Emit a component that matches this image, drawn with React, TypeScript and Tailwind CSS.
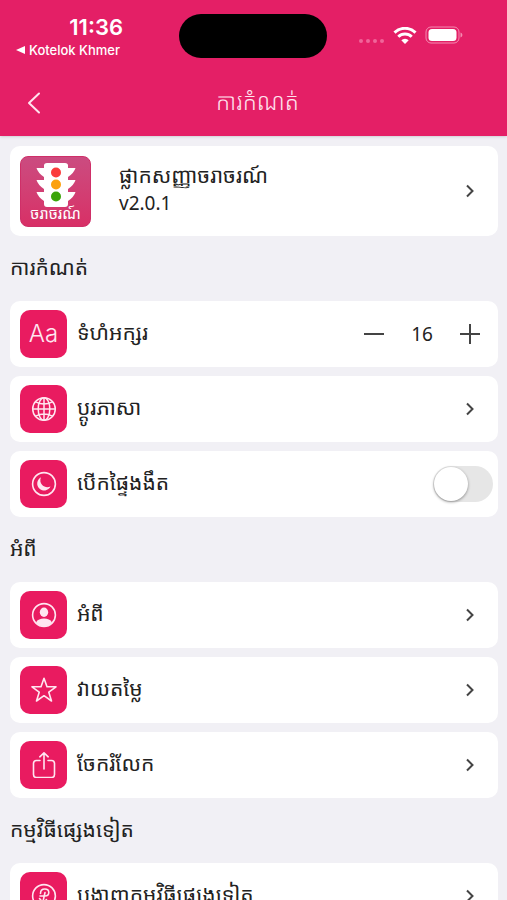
import { useState } from "react";
import type { ReactNode } from "react";

const svgProps = {
    viewBox: "0 0 26 26",
    fill: "none",
    stroke: "currentColor",
    strokeWidth: 1.6,
    strokeLinecap: "round" as const,
    strokeLinejoin: "round" as const,
    className: "h-[26px] w-[26px]",
    "aria-hidden": true,
};

const GlobeIcon = () => <svg {...svgProps} strokeWidth={1.5}>
    <circle cx="13" cy="13" r="11.3" />
    <ellipse cx="13" cy="13" rx="5.8" ry="11.3" />
    <path d="M13 1.7v22.6M1.7 13h22.6M4.6 5.8c5 2.5 11.8 2.5 16.8 0M4.6 20.2c5-2.5 11.8-2.5 16.8 0" />
</svg>;

const MoonIcon = () => <svg {...svgProps}>
    <circle cx="13" cy="13" r="11.4" />
    <path
        d="M10 6.3a7 7 0 1 0 9.5 9.3c-3 1.1-6.2.7-8.3-1.5-2-2.1-2.4-5-1.2-7.8z"
        fill="currentColor"
        stroke="none"
    />
</svg>;

const PersonIcon = () => <svg {...svgProps}>
    <circle cx="13" cy="13" r="11.4" />
    <ellipse cx="13" cy="10.2" rx="4.2" ry="4.7" fill="currentColor" stroke="none" />
    <path d="M5 20.5c1.3-2.8 4.5-3.9 8-3.9s6.7 1.1 8 3.9c-2 2.3-4.9 3.7-8 3.7s-6-1.4-8-3.7z" fill="currentColor" stroke="none" />
</svg>;

const StarIcon = () => <svg {...svgProps}>
    <path d="M13 1.2l3 8.6h9l-7.2 5.4 2.7 8.8-7.5-5.3L5.5 24l2.7-8.8L1 9.8h9z" />
</svg>;

const ShareIcon = () => <svg {...svgProps}>
    <path d="M9 8.5H5.5a3 3 0 0 0-3 3v11a3 3 0 0 0 3 3h15a3 3 0 0 0 3-3v-11a3 3 0 0 0-3-3H17M13 17V.8M8.8 4.8 13 .8l4.2 4" />
</svg>;

const AppsIcon = () => <svg {...svgProps}>
    <circle cx="13" cy="13" r="11.4" />
    <path d="M9.500 10.500c0-3 2-4.500 4.300-4.500 2.500 0 4 1.600 4 3.600s-1.500 3.400-3.800 3.400H9M14 9.500l-2 9M8.500 15.500l3.500 4 3.500-3" />
</svg>;

const ChevronIcon = () => <svg
    viewBox="0 0 8 14"
    fill="none"
    stroke="currentColor"
    strokeWidth="2"
    className="mr-6 h-3.5 w-2 shrink-0 text-[#444]"
    aria-hidden
>
    <path d="M1 1.5 6.5 7 1 12.5" />
</svg>;

const AppLogo = () => <div
    className="flex h-[71px] w-[71px] shrink-0 flex-col items-center rounded-lg
        border border-[#cf2f68] bg-linear-to-b from-[#cb4b80] to-[#d82f66] pt-1.5"
>
    <svg viewBox="0 0 40 44" className="h-11 w-10 shrink-0" aria-hidden>
        <path
            d="M8 2.5Q8 0 11 0h18q3 0 3 2.5V5h7.500q-1.500 5-7.500 9V17h7.500q-1.500 5-7.500 9V29h7.500q-1.500 5-7.500 9V41q0 3-3 3H11q-3 0-3-3V38Q2 34 .5 29H8v-3Q2 22 .5 17H8v-3Q2 10 .5 5H8z"
            fill="#fff"
        />
        <circle cx="20" cy="9.5" r="5" fill="#fb3b3b" />
        <circle cx="20" cy="21.5" r="5" fill="#fca10d" />
        <circle cx="20" cy="33.5" r="5" fill="#3ca50a" />
    </svg>
    <span className="-mt-1 text-[15px] leading-5 text-white">ចរាចរណ៍</span>
</div>;

const IconTile = ({ children }: { children: ReactNode }) => <span
    className="flex h-12 w-[47px] shrink-0 items-center justify-center rounded-[10px] bg-[#e91b60] text-[#ffe6f0]"
>
    {children}
</span>;

const rowClass = "flex h-[66px] w-full items-center gap-2.5 rounded-[10px] bg-white pl-2.5 text-left";

const Label = ({ children }: { children: ReactNode }) => <span className="grow pb-1 whitespace-nowrap">{children}</span>;

const LinkRow = ({ icon, label }: { icon: ReactNode; label: string }) => <button type="button" className={rowClass}>
    <IconTile>{icon}</IconTile>
    <Label>{label}</Label>
    <ChevronIcon />
</button>;

const Section = ({ title, children }: { title: string; children: ReactNode }) => <section>
    <h2 className="flex h-[65px] items-center pb-1 whitespace-nowrap">{title}</h2>
    <div className="flex flex-col gap-[9px]">{children}</div>
</section>;

const StatusBar = () => <div className="grid grid-cols-3 px-4 pt-3.5 text-white">
    <div className="w-[107px]">
        <div className="text-right font-['Inter'] text-[22px] leading-[26px] font-semibold">11:36</div>
        <a href="#" className="flex items-center gap-1 font-['Inter'] text-[13px] leading-5 font-medium whitespace-nowrap">
            <svg viewBox="0 0 9 8" className="h-2 w-[9px]" fill="currentColor" aria-hidden>
                <path d="M0 4 9 0v8z" />
            </svg>
            Kotelok Khmer
        </a>
    </div>
    <div className="h-11 w-[148px] justify-self-center rounded-full bg-black"></div>
    <div className="flex h-[42px] items-center justify-end gap-2 pr-7">
        <svg viewBox="0 0 26 4" className="mt-3 h-1 w-[26px]" fill="#f0659a" aria-hidden>
            <circle cx="2" cy="2" r="2" />
            <circle cx="9" cy="2" r="2" />
            <circle cx="16" cy="2" r="2" />
            <circle cx="23" cy="2" r="2" />
        </svg>
        <svg viewBox="0 0 24 17" className="h-[17px] w-6" aria-hidden>
            <path d="M1.5 5.6a15 15 0 0 1 21 0M5.3 9.8a9.5 9.5 0 0 1 13.4 0" fill="none" stroke="currentColor" strokeWidth="3" />
            <path d="M12 17 8.3 13.3a5.3 5.3 0 0 1 7.4 0z" fill="currentColor" />
        </svg>
        <svg viewBox="0 0 38 18" className="h-[18px] w-[38px]" aria-hidden>
            <rect x="1" y="1" width="33" height="16" rx="5" fill="none" stroke="#f48bb1" />
            <rect x="3.5" y="3" width="28" height="12" rx="3.5" fill="currentColor" />
            <path d="M35.5 6.5c2.5.8 2.5 4.2 0 5z" fill="#f48bb1" />
        </svg>
    </div>
</div>;

const App = () => {

    const [fontSize, setFontSize] = useState(16);
    const [dark, setDark] = useState(false);

    return <div
        className="min-h-screen bg-[#f1f0f5] font-['Noto_Sans_Khmer','Noto_Sans','DejaVu_Sans',sans-serif]
            text-[21px] leading-7 text-[#222]"
    >
        <header className="h-[136px] bg-[#e41f66] shadow-sm">
            <StatusBar />
            <div className="grid grid-cols-[48px_1fr_40px] items-center px-2.5 pt-[19px] text-[#ffe3ee]">
                <button type="button" aria-label="Back" className="flex h-12 items-center justify-center">
                    <svg
                        viewBox="0 0 14 22"
                        className="h-[22px] w-3.5"
                        fill="none"
                        stroke="currentColor"
                        strokeWidth="2"
                        strokeLinecap="round"
                        strokeLinejoin="round"
                        aria-hidden
                    >
                        <path d="M12 1.5 2 11l10 9.5" />
                    </svg>
                </button>
                <h1 className="pb-1 text-center text-[23px] font-light whitespace-nowrap">ការកំណត់</h1>
            </div>
        </header>
        <main className="pt-2.5 pr-[9px] pb-2.5 pl-2.5">
            <button type="button" className="flex h-[90px] w-full items-center rounded-[10px] bg-white pl-2.5 text-left">
                <AppLogo />
                <span className="flex grow flex-col pb-1 pl-7 whitespace-nowrap">
                    <span>ផ្លាកសញ្ញាចរាចរណ៍</span>
                    <span className="text-[19px]">v2.0.1</span>
                </span>
                <ChevronIcon />
            </button>
            <Section title="ការកំណត់">
                <div className={rowClass}>
                    <IconTile>
                        <span className="font-['Inter'] text-[24px] font-light">Aa</span>
                    </IconTile>
                    <Label>ទំហំអក្សរ</Label>
                    <div className="flex items-center pr-2 text-[#444]">
                        <button
                            type="button"
                            aria-label="Decrease"
                            className="flex h-10 w-10 items-center justify-center"
                            onClick={() => setFontSize(fontSize - 1)}
                        >
                            <svg viewBox="0 0 20 20" className="h-5 w-5" stroke="currentColor" strokeWidth="2" aria-hidden>
                                <path d="M0 10h20" />
                            </svg>
                        </button>
                        <output className="w-14 text-center text-[19px] text-[#222]">{fontSize}</output>
                        <button
                            type="button"
                            aria-label="Increase"
                            className="flex h-10 w-10 items-center justify-center"
                            onClick={() => setFontSize(fontSize + 1)}
                        >
                            <svg viewBox="0 0 20 20" className="h-5 w-5" stroke="currentColor" strokeWidth="2" aria-hidden>
                                <path d="M0 10h20M10 0v20" />
                            </svg>
                        </button>
                    </div>
                </div>
                <LinkRow icon={<GlobeIcon />} label="ប្ដូរភាសា" />
                <label className={rowClass}>
                    <IconTile><MoonIcon /></IconTile>
                    <Label>បើកផ្ទៃងងឹត</Label>
                    <input
                        type="checkbox"
                        role="switch"
                        checked={dark}
                        onChange={(e) => setDark(e.target.checked)}
                        className="mr-[5px] flex h-9 w-[60px] shrink-0 appearance-none items-center rounded-full bg-[#e6e6e6] p-px
                            before:h-[34px] before:w-[34px] before:rounded-full before:bg-white
                            before:shadow-[0_1px_3px_rgba(0,0,0,0.4)] checked:justify-end checked:bg-[#e91b60]"
                    />
                </label>
            </Section>
            <Section title="អំពី">
                <LinkRow icon={<PersonIcon />} label="អំពី" />
                <LinkRow icon={<StarIcon />} label="វាយតម្លៃ" />
                <LinkRow icon={<ShareIcon />} label="ចែករំលែក" />
            </Section>
            <Section title="កម្មវិធីផ្សេងទៀត">
                <LinkRow icon={<AppsIcon />} label="បង្ហាញកម្មវិធីផ្សេងទៀត" />
            </Section>
        </main>
    </div>
};

export default App;
